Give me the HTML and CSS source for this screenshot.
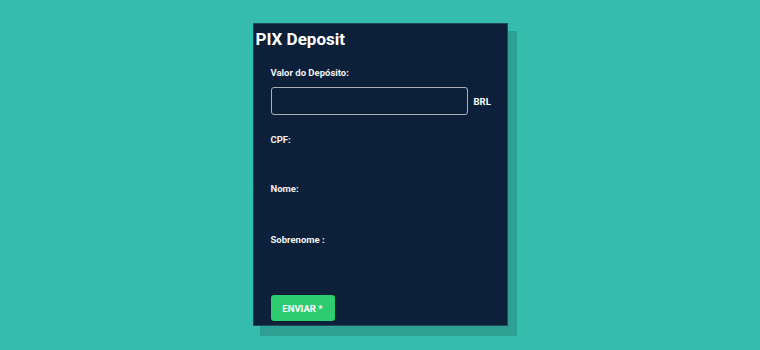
FILE: index.html
```html
<!DOCTYPE html>
<html lang="pt">
<head>
    <meta charset="UTF-8">
    <meta name="viewport" content="width=device-width, initial-scale=1.0">
    <title>PIX Deposit</title>
    <link rel="stylesheet" href="styles.css">
</head>
<body>
    <div class="card">
        <h2>PIX Deposit</h2>
        <form class="deposit-form" onsubmit="return false">
            <label class="field-label">Valor do Depósito:</label>
            <div class="amount-row">
                <input type="text" id="amount">
                <span class="currency">BRL</span>
            </div>
            <label class="field-label cpf">CPF:</label>
            <label class="field-label name">Nome:</label>
            <label class="field-label surname">Sobrenome :</label>
            <button type="submit">ENVIAR *</button>
        </form>
    </div>
</body>
</html>
```

FILE: styles.css
```css
body {
    margin: 0;
    font-family: Roboto, "Liberation Sans", sans-serif;
    background: #35bcad;
    height: 350px;
    display: flex;
    justify-content: center;
}

.card {
    box-sizing: border-box;
    width: 255px;
    height: 303px;
    margin: 23px 0 0 0;
    background: #0c2039;
    border: 1px solid #1f4a5c;
    box-shadow: 8px 9px 0 1px rgba(0, 0, 0, 0.15);
    color: #fff;
}

.card h2 {
    margin: 5px 0 0 2px;
    font-size: 17px;
    font-weight: 700;
    line-height: 21px;
}

.deposit-form {
    padding: 0 0 0 17px;
    display: flex;
    flex-direction: column;
    align-items: flex-start;
}

.field-label {
    font-size: 9.5px;
    font-weight: 700;
    color: #f2f2f5;
    line-height: 12px;
}

.deposit-form > .field-label:first-child {
    margin-top: 17px;
}

.amount-row {
    display: flex;
    align-items: center;
    margin-top: 8px;
}

.amount-row input {
    box-sizing: border-box;
    width: 197px;
    height: 28px;
    background: transparent;
    border: 1px solid #a9b0ba;
    border-radius: 3px;
    color: #fff;
}

.currency {
    margin-left: 6px;
    font-size: 9.5px;
    font-weight: 700;
}

.cpf {
    margin-top: 19px;
}

.name {
    margin-top: 37px;
}

.surname {
    margin-top: 39px;
}

button {
    margin-top: 49px;
    width: 64px;
    height: 26px;
    border: none;
    border-radius: 3px;
    background: #2ecc71;
    color: #fff;
    font-family: inherit;
    font-size: 9.5px;
    font-weight: 700;
}
```
